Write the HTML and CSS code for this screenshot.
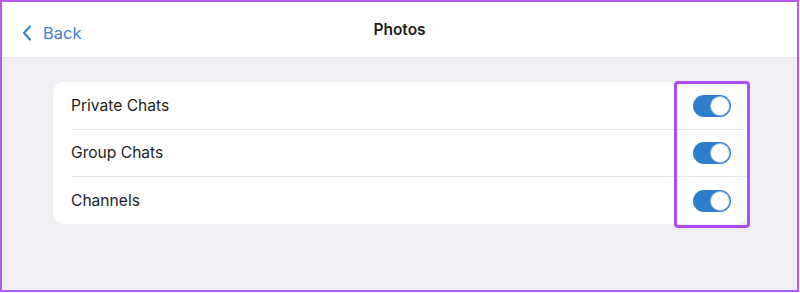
FILE: index.html
```html
<!DOCTYPE html>
<html>
<head>
<meta charset="utf-8">
<link rel="stylesheet" href="styles.css">
</head>
<body>
<div class="frame">
  <header class="nav">
    <div class="back">
      <svg class="chev" width="10" height="16" viewBox="0 0 10 16"><path d="M8 1.5 L2 8 L8 14.5" fill="none" stroke="#3a84cf" stroke-width="2.2" stroke-linecap="round" stroke-linejoin="round"/></svg>
      <span>Back</span>
    </div>
    <div class="title">Photos</div>
  </header>
  <main class="content">
    <div class="card">
      <div class="row"><span>Private Chats</span><span class="toggle"><span class="knob"></span></span></div>
      <div class="row"><span>Group Chats</span><span class="toggle"><span class="knob"></span></span></div>
      <div class="row last"><span>Channels</span><span class="toggle"><span class="knob"></span></span></div>
      <div class="highlight"></div>
    </div>
  </main>
</div>
</body>
</html>
```
FILE: styles.css
```css
html, body { margin: 0; padding: 0; }
body { width: 800px; height: 293px; overflow: hidden; font-family: Inter, "Noto Sans", sans-serif; }
.frame {
  box-sizing: border-box;
  width: 799px;
  height: 292px;
  border: 2px solid #b45cf0;
  background: #efeff4;
  display: flex;
  flex-direction: column;
}
.nav {
  height: 55px;
  background: #fff;
  border-bottom: 1px solid #e3e3e8;
  position: relative;
  display: flex;
  align-items: center;
  justify-content: center;
  flex-shrink: 0;
}
.back {
  position: absolute;
  left: 20px;
  top: 21px;
  display: flex;
  align-items: center;
  gap: 11px;
  color: #3a84cf;
  font-size: 16.5px;
}
.title {
  font-size: 15.5px;
  font-weight: 600;
  color: #1c1c1e;
  margin-top: 0;
}
.content {
  padding: 24px 50px 0 51px;
}
.card {
  position: relative;
  background: #fff;
  border-radius: 11px;
  padding-left: 18px;
}
.row {
  height: 47.5px;
  display: flex;
  align-items: center;
  justify-content: space-between;
  padding-right: 16px;
  border-bottom: 1px solid #e8e8ec;
  box-sizing: border-box;
  font-size: 15.6px;
  color: #1e1e20;
}
.row.last { border-bottom: none; height: 47px; }
.toggle {
  width: 38px;
  height: 22px;
  border-radius: 11px;
  background: #2d7fcc;
  position: relative;
  margin-top: 1px;
}
.knob {
  position: absolute;
  right: 1px;
  top: 1px;
  width: 20px;
  height: 20px;
  box-sizing: border-box;
  border-radius: 50%;
  background: #fff;
  border: 1px solid #8fb9e3;
}
.highlight {
  position: absolute;
  left: 621px;
  top: -1px;
  width: 76px;
  height: 147px;
  box-sizing: border-box;
  border: 3px solid #b04cf2;
  border-radius: 4px;
}
```
